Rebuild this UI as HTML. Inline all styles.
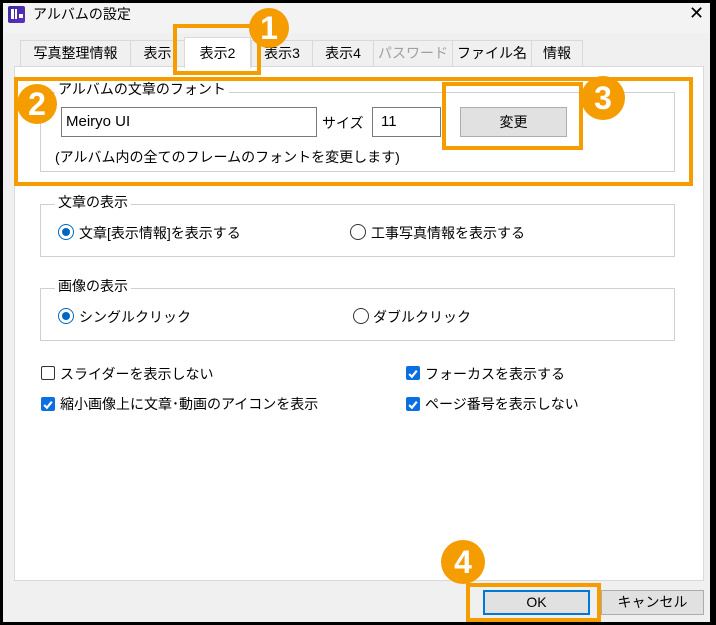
<!DOCTYPE html>
<html><head><meta charset="utf-8"><style>
*{box-sizing:border-box;margin:0;padding:0}
body{width:716px;height:625px;overflow:hidden;background:#000;font-family:"Liberation Sans","Noto Sans CJK JP",sans-serif;font-size:14px;color:#000;position:relative}
.win{position:absolute;left:3px;top:3px;width:707px;height:619px;background:#f0f0f0}
.a{position:absolute;white-space:nowrap}
.tab{position:absolute;top:40px;height:27px;background:#f0f0f0;border:1px solid #d9d9d9;border-bottom:none;text-align:center;line-height:25px;font-size:14px}
.panel{position:absolute;left:14px;top:66px;width:690px;height:515px;background:#fff;border:1px solid #d9d9d9}
.grp{position:absolute;border:1px solid #d0d0d0}
.leg{position:absolute;background:#fff;padding:0 3px;font-size:14px;line-height:15px}
.or{position:absolute;border:4px solid #f59c00}
.circ{position:absolute;border-radius:50%;background:#f59c00;color:#fff;font-weight:bold;text-align:center;font-family:"Liberation Sans",sans-serif}
.radio{position:absolute;width:16px;height:16px;border-radius:50%;border:1px solid #333;background:#fff}
.radio.on{border-color:#0067c0}
.radio.on::after{content:"";position:absolute;left:3px;top:3px;width:8px;height:8px;border-radius:50%;background:#0067c0}
.cb{position:absolute;width:14px;height:14px;border:1px solid #333;border-radius:2px;background:#fff}
.cb.on{background:#0a6fe0;border-color:#0a6fe0}
.btn{position:absolute;background:#e1e1e1;border:1px solid #adadad;text-align:center}
</style></head><body>
<div class="win"></div>
<div class="a" style="top:3px;height:30px;background:#f3f3f3;left:3px;width:707px"></div>
<div class="a" style="left:8px;top:6px;width:17px;height:17px;background:linear-gradient(135deg,#3a2a9a,#6030c0);border-radius:2px"></div>
<div class="a" style="left:11px;top:9px;width:3px;height:10px;background:#fff"></div>
<div class="a" style="left:15px;top:9px;width:2px;height:10px;background:#fff"></div>
<div class="a" style="left:19px;top:14px;width:4px;height:4px;background:#fff"></div>
<div class="a" style="left:33px;top:4px;font-size:14px;line-height:20px">アルバムの設定</div>
<div class="a" style="left:689px;top:2px;font-size:18px;line-height:22px">✕</div>

<div class="tab" style="left:20px;width:111px">写真整理情報</div>
<div class="tab" style="left:130px;width:55px">表示</div>
<div class="tab" style="left:251px;width:62px">表示3</div>
<div class="tab" style="left:312px;width:62px">表示4</div>
<div class="tab" style="left:373px;width:80px;color:#a0a0a0">パスワード</div>
<div class="tab" style="left:452px;width:80px">ファイル名</div>
<div class="tab" style="left:531px;width:52px">情報</div>
<div class="panel"></div>
<div class="tab" style="left:184px;top:37px;height:31px;width:67px;background:#fff;line-height:30px">表示2</div>

<div class="grp" style="left:40px;top:92px;width:635px;height:80px"></div>
<div class="leg" style="left:55px;top:82px">アルバムの文章のフォント</div>
<div class="a" style="left:61px;top:107px;width:256px;height:30px;border:1px solid #7a7a7a;background:#fff;padding-left:4px;line-height:28px;font-size:15px">Meiryo UI</div>
<div class="a" style="left:322px;top:113px">サイズ</div>
<div class="a" style="left:372px;top:107px;width:69px;height:30px;border:1px solid #7a7a7a;background:#fff;padding-left:8px;line-height:28px;font-size:15px">11</div>
<div class="btn" style="left:460px;top:107px;width:107px;height:30px;line-height:28px">変更</div>
<div class="a" style="left:55px;top:147px">(アルバム内の全てのフレームのフォントを変更します)</div>

<div class="grp" style="left:40px;top:204px;width:635px;height:53px"></div>
<div class="leg" style="left:55px;top:195px">文章の表示</div>
<div class="radio on" style="left:58px;top:224px"></div>
<div class="a" style="left:79px;top:223px">文章[表示情報]を表示する</div>
<div class="radio" style="left:350px;top:224px"></div>
<div class="a" style="left:371px;top:223px">工事写真情報を表示する</div>

<div class="grp" style="left:40px;top:288px;width:635px;height:53px"></div>
<div class="leg" style="left:55px;top:279px">画像の表示</div>
<div class="radio on" style="left:58px;top:308px"></div>
<div class="a" style="left:79px;top:307px">シングルクリック</div>
<div class="radio" style="left:353px;top:308px"></div>
<div class="a" style="left:373px;top:307px">ダブルクリック</div>

<div class="cb" style="left:41px;top:366px"></div>
<div class="a" style="left:60px;top:364px">スライダーを表示しない</div>
<div class="cb on" style="left:41px;top:397px"><svg width="12" height="12" viewBox="0 0 11 11"><path d="M2 5.5 L4.5 8 L9 2.5" stroke="#fff" stroke-width="2" fill="none"/></svg></div>
<div class="a" style="left:60px;top:394px">縮小画像上に文章･動画のアイコンを表示</div>
<div class="cb on" style="left:406px;top:366px"><svg width="12" height="12" viewBox="0 0 11 11"><path d="M2 5.5 L4.5 8 L9 2.5" stroke="#fff" stroke-width="2" fill="none"/></svg></div>
<div class="a" style="left:425px;top:364px">フォーカスを表示する</div>
<div class="cb on" style="left:406px;top:397px"><svg width="12" height="12" viewBox="0 0 11 11"><path d="M2 5.5 L4.5 8 L9 2.5" stroke="#fff" stroke-width="2" fill="none"/></svg></div>
<div class="a" style="left:425px;top:394px">ページ番号を表示しない</div>

<div class="btn" style="left:483px;top:590px;width:107px;height:25px;border:2px solid #0078d7;line-height:21px">OK</div>
<div class="btn" style="left:601px;top:590px;width:103px;height:25px;line-height:23px">キャンセル</div>

<div class="or" style="left:173px;top:24px;width:88px;height:51px"></div>
<div class="or" style="left:14px;top:77px;width:679px;height:109px"></div>
<div class="or" style="left:442px;top:82px;width:141px;height:68px"></div>
<div class="or" style="left:466px;top:583px;width:135px;height:39px"></div>
<div class="circ" style="left:249px;top:8px;width:40px;height:40px;font-size:32px;line-height:40px">1</div>
<div class="circ" style="left:17px;top:84px;width:40px;height:40px;font-size:32px;line-height:40px">2</div>
<div class="circ" style="left:581px;top:76px;width:44px;height:44px;font-size:32px;line-height:44px">3</div>
<div class="circ" style="left:441px;top:540px;width:44px;height:44px;font-size:32px;line-height:44px">4</div>
</body></html>
